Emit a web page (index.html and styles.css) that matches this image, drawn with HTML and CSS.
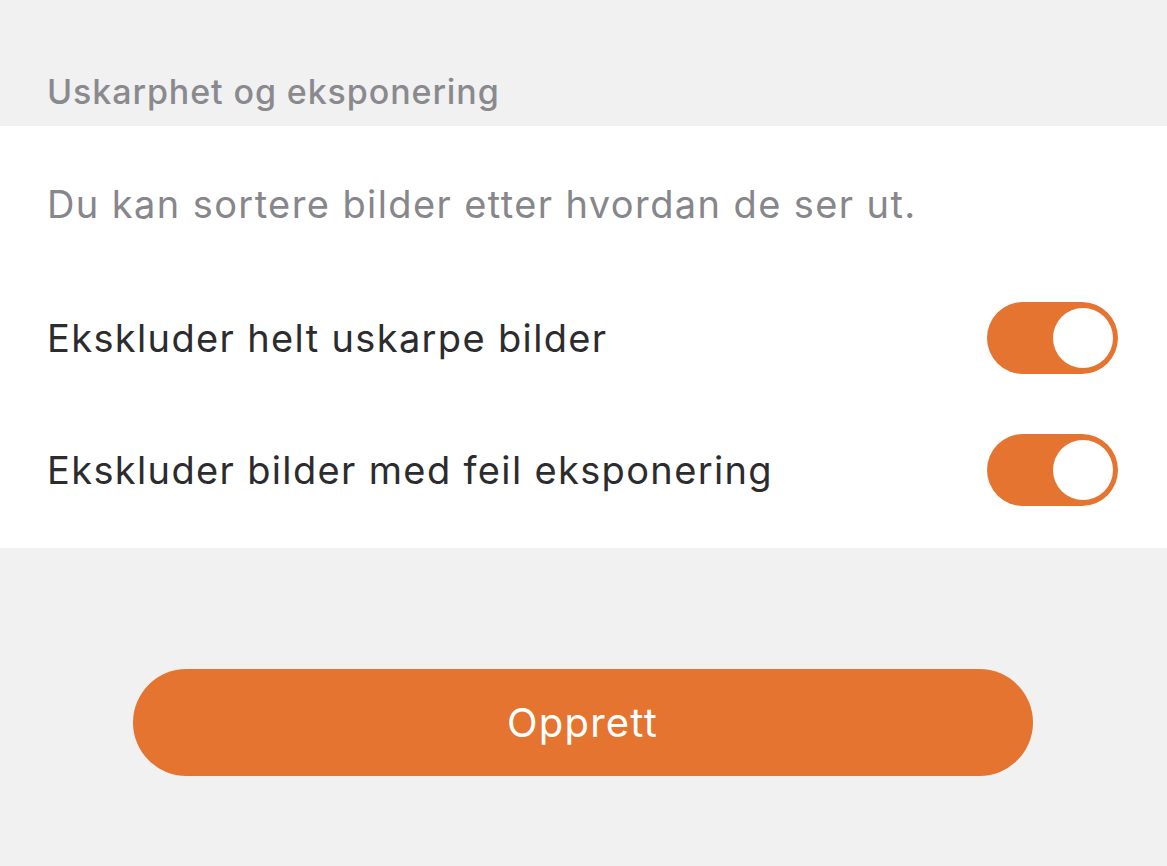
FILE: index.html
```html
<!DOCTYPE html>
<html lang="no">
<head>
<meta charset="utf-8">
<link rel="stylesheet" href="styles.css">
</head>
<body>
<div class="page">
  <div class="section-header">Uskarphet og eksponering</div>
  <div class="panel">
    <div class="desc">Du kan sortere bilder etter hvordan de ser ut.</div>
    <div class="row">
      <span class="label">Ekskluder helt uskarpe bilder</span>
      <span class="toggle"><span class="knob"></span></span>
    </div>
    <div class="row">
      <span class="label">Ekskluder bilder med feil eksponering</span>
      <span class="toggle"><span class="knob"></span></span>
    </div>
  </div>
  <div class="actions">
    <button class="primary">Opprett</button>
  </div>
</div>
</body>
</html>
```
FILE: styles.css
```css
html, body {
  margin: 0;
  padding: 0;
  background: #f1f1f1;
  font-family: Inter, "Liberation Sans", sans-serif;
}
.page {
  width: 1167px;
  height: 866px;
  display: flex;
  flex-direction: column;
}
.section-header {
  height: 126px;
  box-sizing: border-box;
  padding: 71px 0 0 47px;
  font-size: 34px;
  font-weight: 500;
  letter-spacing: 0.9px;
  line-height: 42px;
  color: #8a8a8e;
}
.panel {
  background: #ffffff;
  height: 422px;
  box-sizing: border-box;
  padding: 0 49px 12px 47px;
  display: flex;
  flex-direction: column;
}
.desc {
  height: 146px;
  box-sizing: border-box;
  padding-top: 55px;
  font-size: 38px;
  letter-spacing: 1.4px;
  line-height: 46px;
  color: #86868b;
}
.row {
  height: 132px;
  display: flex;
  align-items: center;
  justify-content: space-between;
}
.label {
  font-size: 38px;
  letter-spacing: 1.35px;
  color: #2c2c2e;
}
.toggle {
  width: 131px;
  height: 72px;
  border-radius: 36px;
  background: #e4742f;
  display: flex;
  align-items: center;
  justify-content: flex-end;
  padding-right: 5px;
  box-sizing: border-box;
}
.knob {
  width: 60px;
  height: 60px;
  border-radius: 50%;
  background: #ffffff;
}
.actions {
  display: flex;
  justify-content: center;
  padding-top: 121px;
}
.primary {
  width: 900px;
  height: 107px;
  border: none;
  border-radius: 54px;
  background: #e4742f;
  color: #ffffff;
  font-family: Inter, "Liberation Sans", sans-serif;
  font-size: 40px;
  letter-spacing: 1.2px;
  padding: 0;
  margin-left: -2px;
}
```
